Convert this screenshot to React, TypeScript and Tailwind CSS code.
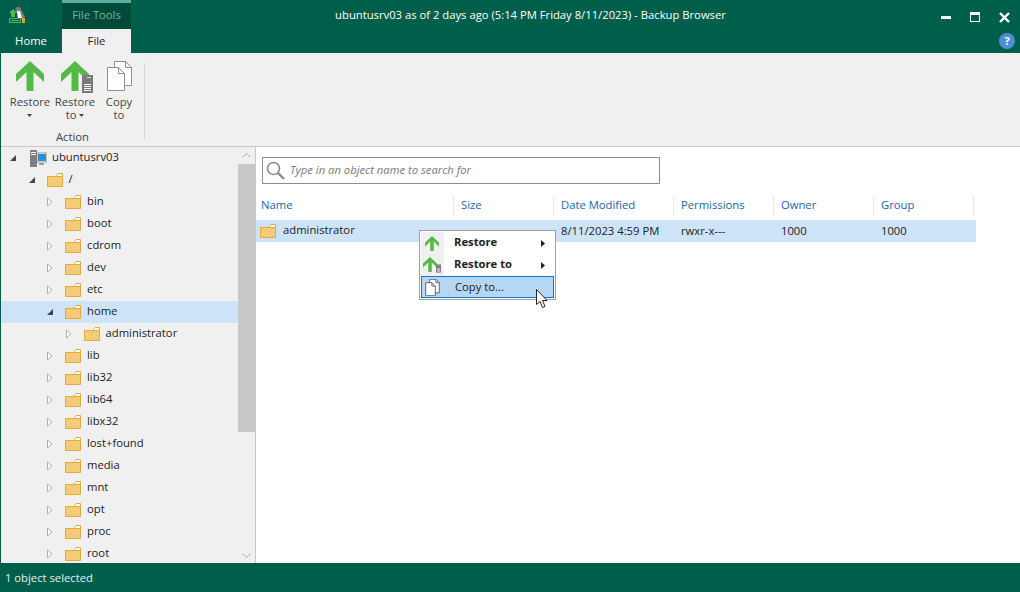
import React from 'react';

const treeRows = [
  { name: 'ubuntusrv03', level: 0, open: true, server: true },
  { name: '/', level: 1, open: true },
  { name: 'bin', level: 2 },
  { name: 'boot', level: 2 },
  { name: 'cdrom', level: 2 },
  { name: 'dev', level: 2 },
  { name: 'etc', level: 2 },
  { name: 'home', level: 2, open: true, selected: true },
  { name: 'administrator', level: 3 },
  { name: 'lib', level: 2 },
  { name: 'lib32', level: 2 },
  { name: 'lib64', level: 2 },
  { name: 'libx32', level: 2 },
  { name: 'lost+found', level: 2 },
  { name: 'media', level: 2 },
  { name: 'mnt', level: 2 },
  { name: 'opt', level: 2 },
  { name: 'proc', level: 2 },
  { name: 'root', level: 2 },
];

const columns = [
  { label: 'Name', width: 'w-[198px]' },
  { label: 'Size', width: 'w-[100px]' },
  { label: 'Date Modified', width: 'w-[120px]' },
  { label: 'Permissions', width: 'w-[100px]' },
  { label: 'Owner', width: 'w-[100px]' },
  { label: 'Group', width: 'w-[100px]' },
];

const Folder = () => (
  <svg width="16" height="14" viewBox="0 0 16 14" className="shrink-0">
    <path d="M0.5 3.5H15.5V13.5H0.5Z" fill="#f4cb76" stroke="#e3a93c" />
    <path d="M9.5 3.5V2.5L11 0.5H15.5V3.5Z" fill="#fff" stroke="#e3a93c" />
  </svg>
);

const ServerIcon = () => (
  <svg width="17" height="17" viewBox="0 0 17 17" className="shrink-0">
    <rect x="0" y="0" width="7" height="17" fill="#7f7f7f" />
    <rect x="1" y="2" width="5" height="1" fill="#fff" />
    <rect x="1" y="4" width="5" height="1" fill="#fff" />
    <rect x="7" y="3" width="10" height="9" fill="#fff" stroke="#7f7f7f" strokeWidth="0.8" />
    <rect x="8" y="4" width="8" height="7" fill="#2f8fd0" />
    <rect x="9" y="13" width="5" height="2" fill="#9a9a9a" />
  </svg>
);

const Arrow = ({ w, h }: { w: number; h: number }) => (
  <svg width={w} height={h} viewBox="0 0 28 30" className="shrink-0">
    <path d="M14 0L28 13V21L17.5 11V30H10.5V11L0 21V13Z" fill="#55b947" />
  </svg>
);

const MiniServer = ({ w, h }: { w: number; h: number }) => (
  <svg width={w} height={h} viewBox="0 0 11 18" className="absolute right-0 bottom-0">
    <rect width="11" height="18" fill="#7a7a7a" />
    <rect x="5" y="2" width="4" height="1" fill="#ddd" />
    <rect x="2" y="9" width="7" height="1" fill="#fff" />
    <rect x="2" y="11" width="7" height="1" fill="#fff" />
    <rect x="2" y="13" width="7" height="1" fill="#fff" />
    <rect x="2" y="15" width="7" height="1" fill="#fff" />
  </svg>
);

const CopyIcon = ({ w, h, stroke }: { w: number; h: number; stroke: string }) => (
  <svg width={w} height={h} viewBox="0 0 25 30" className="shrink-0">
    <g stroke={stroke}>
      <path d="M7.5 0.5H18.5L24.5 6.5V24.5H7.5Z" fill="#fff" vectorEffect="non-scaling-stroke" />
      <path d="M18.5 0.5V6.5H24.5" fill="none" vectorEffect="non-scaling-stroke" />
      <path d="M0.5 6.5H11.5L17.5 12.5V29.5H0.5Z" fill="#fff" vectorEffect="non-scaling-stroke" />
      <path d="M11.5 6.5V12.5H17.5" fill="none" vectorEffect="non-scaling-stroke" />
    </g>
  </svg>
);

const Caret = () => (
  <svg width="5" height="3" viewBox="0 0 5 3" className="inline-block">
    <path d="M0 0H5L2.5 3Z" fill="#444" />
  </svg>
);

const Expander = ({ open }: { open?: boolean }) =>
  open ? (
    <svg width="8" height="8" viewBox="0 0 8 8" className="shrink-0">
      <path d="M7 1V7H1Z" fill="#444" />
    </svg>
  ) : (
    <svg width="8" height="10" viewBox="0 0 8 10" className="shrink-0">
      <path d="M1.5 1L6 5L1.5 9Z" fill="#fff" stroke="#b0b0b0" />
    </svg>
  );

const MenuTriangle = () => (
  <svg width="4" height="7" viewBox="0 0 4 7" className="ml-auto mr-[9px]">
    <path d="M0 0L4 3.5L0 7Z" fill="#222" />
  </svg>
);

const RibbonButton = ({ icon, children, width }: { icon: React.ReactNode; children: React.ReactNode; width: string }) => (
  <div className={`flex flex-col items-center ${width}`}>
    <div className="h-[32px] flex items-start justify-center relative w-full">{icon}</div>
    <div className="mt-[2px] text-center text-[#444] leading-[13px]">{children}</div>
  </div>
);

export default function App() {
  return (
    <div
      className="relative w-[1020px] h-[592px] overflow-hidden bg-[#005f4b] flex flex-col text-[11.25px]"
      style={{ fontFamily: '"Open Sans", "Noto Sans", sans-serif' }}
    >
      {/* Title bar */}
      <div className="h-[29px] flex shrink-0">
        <div className="w-[62px] pl-[9px] pt-[7px]">
          <svg width="17" height="17" viewBox="0 0 17 17">
            <path d="M4 2L8 6H6V10H2V6H0Z" fill="#55b947" />
            <rect x="0.5" y="11.5" width="11" height="4" fill="#005f4b" stroke="#55b947" />
            <rect x="2" y="13" width="8" height="1" fill="#55b947" />
            <path d="M7 1C8 -0.5 12 -0.5 12 2L16 10L13 12H8V6L6 3Z" fill="#7a7a7a" />
            <path d="M8 4H11L13 11H9Z" fill="#fff" />
            <rect x="13" y="11" width="3" height="5" fill="#e0a030" />
          </svg>
        </div>
        <div className="w-[69px] bg-[#004a3a] flex flex-col">
          <div className="h-[3px] bg-[#5eae9b]" />
          <div className="text-center text-[#6db9a6] leading-[24px]">File Tools</div>
        </div>
        <div className="flex-1 text-center text-white leading-[29px]">
          ubuntusrv03 as of 2 days ago (5:14 PM Friday 8/11/2023) - Backup Browser
        </div>
        <div className="w-[90px] flex items-start text-white">
          <div className="w-[10px] h-[3px] bg-white mt-[16px] ml-[11px]" />
          <div className="w-[10px] h-[10px] border border-white border-t-[3px] mt-[12px] ml-[19px]" />
          <svg width="11" height="11" viewBox="0 0 11 11" className="mt-[12px] ml-[19px]">
            <path d="M1 1L10 10M10 1L1 10" stroke="#fff" strokeWidth="2.4" />
          </svg>
        </div>
      </div>

      {/* Tabs */}
      <div className="h-[24px] flex shrink-0 relative">
        <div className="w-[62px] text-center text-white leading-[24px]">Home</div>
        <div className="w-[69px] bg-[#f0f0f0] text-center text-[#222] leading-[24px]">File</div>
        <div className="absolute right-[5px] top-[4px] w-[16px] h-[16px] rounded-full bg-[#4a90d0] text-white text-[11px] font-bold leading-[16px] text-center">
          ?
        </div>
      </div>

      {/* Main window */}
      <div className="flex-1 min-h-0 ml-[1px] flex flex-col bg-white">
        {/* Ribbon */}
        <div className="h-[94px] shrink-0 bg-[#f0f0f0] border-b border-[#c9c9c9] flex pt-[8px]">
          <div className="w-[143px] flex flex-col">
            <div className="flex h-[70px] pl-[6px]">
              <RibbonButton width="w-[46px]" icon={<Arrow w={28} h={30} />}>
                Restore
                <div className="leading-[13px]">
                  <Caret />
                </div>
              </RibbonButton>
              <RibbonButton
                width="w-[44px]"
                icon={
                  <div className="relative w-[32px] h-[32px] ml-[4px]">
                    <Arrow w={28} h={30} />
                    <MiniServer w={11} h={18} />
                  </div>
                }
              >
                Restore
                <div className="leading-[13px]">
                  to <Caret />
                </div>
              </RibbonButton>
              <RibbonButton width="w-[44px]" icon={<CopyIcon w={25} h={30} stroke="#8f8f8f" />}>
                Copy
                <div className="leading-[13px]">to</div>
              </RibbonButton>
            </div>
            <div className="text-center text-[#444] leading-[14px] mt-[-1px]">Action</div>
          </div>
          <div className="w-px h-[76px] mt-[2px] bg-[#d4d4d4]" />
        </div>

        {/* Body */}
        <div className="flex-1 min-h-0 flex">
          {/* Tree */}
          <div className="w-[255px] shrink-0 bg-[#f0f0f0] border-r border-[#c9c9c9] flex overflow-hidden">
            <div className="w-[237px] shrink-0">
              {treeRows.map((row) => (
                <div
                  key={row.name + row.level}
                  className={`h-[22px] flex items-center text-[#222] ${row.selected ? 'bg-[#cde4f8]' : ''}`}
                  style={{ paddingLeft: 8 + row.level * 18.5 }}
                >
                  <div className="w-[8px] flex justify-center">
                    <Expander open={row.open} />
                  </div>
                  <div className={`${row.server ? 'ml-[13px]' : 'ml-[11px]'} flex items-center`}>
                    {row.server ? <ServerIcon /> : <Folder />}
                  </div>
                  <span className={`pb-[2px] ${row.server ? 'ml-[5px]' : 'ml-[6px]'}`}>{row.name}</span>
                </div>
              ))}
            </div>
            <div className="flex-1 flex flex-col items-center">
              <svg width="9" height="5" viewBox="0 0 9 5" className="mt-[6px] mb-[6px]">
                <path d="M0.5 4.5L4.5 0.5L8.5 4.5" fill="none" stroke="#aaa" />
              </svg>
              <div className="w-full h-[268px] bg-[#c8c8c8]" />
              <svg width="9" height="5" viewBox="0 0 9 5" className="mt-[121px]">
                <path d="M0.5 0.5L4.5 4.5L8.5 0.5" fill="none" stroke="#aaa" />
              </svg>
            </div>
          </div>

          {/* File list */}
          <div className="flex-1 min-w-0 bg-white">
            <div className="ml-[6px] mt-[10px] w-[398px] h-[27px] border border-[#8c8c8c] flex items-center pl-[3px]">
              <svg width="19" height="19" viewBox="0 0 19 19" className="shrink-0">
                <circle cx="7.5" cy="7.5" r="6" fill="none" stroke="#8a8a8a" strokeWidth="1.6" />
                <path d="M12 12L18 18" stroke="#8a8a8a" strokeWidth="2.4" />
              </svg>
              <span className="ml-[5px] italic text-[#7a7a7a]">Type in an object name to search for</span>
            </div>
            <div className="flex mt-[12px] h-[20px] items-center">
              {columns.map((col) => (
                <div
                  key={col.label}
                  className={`${col.width} h-full flex items-center pl-[7px] pb-[2px] first:pl-[5px] border-r border-[#e8e8e8] text-[#1268ac] box-border`}
                >
                  {col.label}
                </div>
              ))}
            </div>
            <div className="mt-[4px] w-[720px] h-[22px] bg-[#cde4f8] flex items-center text-[#222]">
              <div className="w-[199px] flex items-center pl-[4px]">
                <Folder />
                <span className="ml-[7px] pb-[2px]">administrator</span>
              </div>
              <div className="w-[99px]" />
              <div className="w-[120px] pl-[7px] pt-px">8/11/2023 4:59 PM</div>
              <div className="w-[100px] pl-[7px] pt-px">rwxr-x---</div>
              <div className="w-[100px] pl-[7px] pt-px">1000</div>
              <div className="w-[100px] pl-[7px] pt-px">1000</div>
            </div>
          </div>
        </div>
      </div>

      {/* Status bar */}
      <div className="h-[29px] shrink-0 pl-[5px] leading-[29px] text-[#e6efec]">1 object selected</div>

      {/* Context menu */}
      <div className="absolute left-[419px] top-[230px] w-[137px] h-[70px] bg-white border border-[#a0a0a0] p-px flex flex-col">
        <div className="absolute left-px top-px bottom-px w-[23px] bg-[#f0f0f0]" />
        <div className="relative h-[22px] flex items-center font-bold text-[#222]">
          <div className="w-[22px] flex justify-center">
            <Arrow w={14} h={15} />
          </div>
          <span className="ml-[11px] pb-[2px]">Restore</span>
          <MenuTriangle />
        </div>
        <div className="relative h-[22px] flex items-center font-bold text-[#222]">
          <div className="w-[22px] flex justify-center">
            <div className="relative w-[18px] h-[16px]">
              <Arrow w={14} h={15} />
              <MiniServer w={5} h={9} />
            </div>
          </div>
          <span className="ml-[11px] pb-[2px]">Restore to</span>
          <MenuTriangle />
        </div>
        <div className="relative h-[22px] flex items-center bg-[#b5d7f3] border border-[#0a78d0] text-[#222]">
          <div className="w-[21px] flex justify-center">
            <CopyIcon w={15} h={17} stroke="#666" />
          </div>
          <span className="ml-[12px]">Copy to...</span>
        </div>
      </div>

      {/* Mouse cursor */}
      <svg width="14" height="20" viewBox="0 0 14 20" className="absolute left-[536px] top-[289px]">
        <path d="M0.5 0.5V15.5L4 12.5L6.5 18.5L9 17.5L6.5 11.5H11Z" fill="#fff" stroke="#222" />
      </svg>
    </div>
  );
}
